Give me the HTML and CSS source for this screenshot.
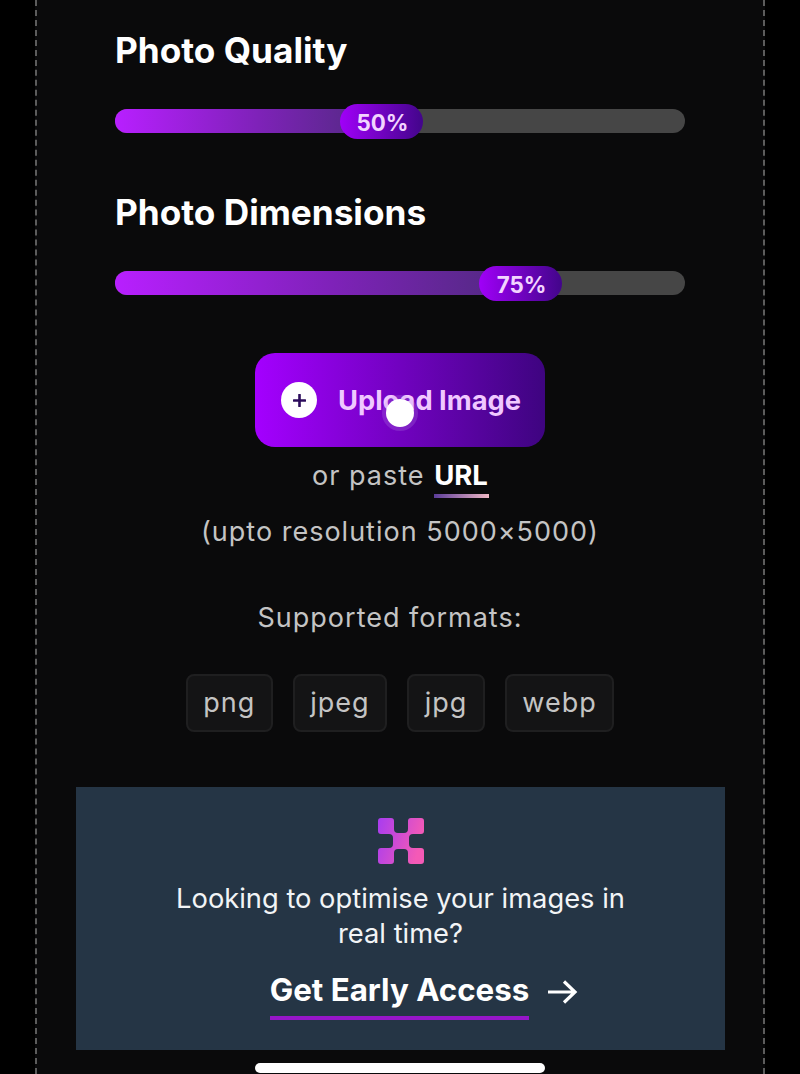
FILE: index.html
```html
<!DOCTYPE html>
<html lang="en">
<head>
<meta charset="utf-8">
<title>Image Optimiser</title>
<link rel="stylesheet" href="styles.css">
</head>
<body>
<main class="frame">
  <section class="controls">
    <h2 class="label">Photo Quality</h2>
    <div class="track">
      <div class="fill" style="width:46%"></div>
      <div class="thumb" style="left:225px">50%</div>
    </div>
    <h2 class="label label-next">Photo Dimensions</h2>
    <div class="track">
      <div class="fill" style="width:70%"></div>
      <div class="thumb" style="left:364px">75%</div>
    </div>
  </section>

  <section class="upload">
    <button class="upload-btn" type="button">
      <span class="plus">
        <svg viewBox="0 0 12 12" width="13" height="13" aria-hidden="true"><path d="M6 .8v10.4M.8 6h10.4" stroke="#2c0c5c" stroke-width="2.4" stroke-linecap="round" fill="none"/></svg>
      </span>
      <span class="upload-text">Upload Image</span>
      <span class="touch"></span>
    </button>
    <p class="paste">or paste <span class="url">URL</span></p>
    <p class="res">(upto resolution 5000×5000)</p>
    <p class="formats">Supported formats:</p>
    <ul class="chips">
      <li class="chip">png</li>
      <li class="chip">jpeg</li>
      <li class="chip">jpg</li>
      <li class="chip">webp</li>
    </ul>
  </section>

  <section class="banner">
    <svg class="logo" viewBox="0 0 46 46" width="46" height="46" aria-hidden="true">
      <defs>
        <linearGradient id="lg" x1="0" y1="0" x2="1" y2="0.3">
          <stop offset="0" stop-color="#a83cf0"/>
          <stop offset="1" stop-color="#f45ab6"/>
        </linearGradient>
      </defs>
      <path fill="url(#lg)" d="M3 0h10a3 3 0 0 1 3 3v8a4 4 0 0 0 4 4h6a4 4 0 0 0 4-4V3a3 3 0 0 1 3-3h10a3 3 0 0 1 3 3v10a3 3 0 0 1-3 3h-8a4 4 0 0 0-4 4v6a4 4 0 0 0 4 4h8a3 3 0 0 1 3 3v10a3 3 0 0 1-3 3H33a3 3 0 0 1-3-3v-8a4 4 0 0 0-4-4h-6a4 4 0 0 0-4 4v8a3 3 0 0 1-3 3H3a3 3 0 0 1-3-3V33a3 3 0 0 1 3-3h8a4 4 0 0 0 4-4v-6a4 4 0 0 0-4-4H3a3 3 0 0 1-3-3V3a3 3 0 0 1 3-3z"/>
    </svg>
    <p class="banner-text">Looking to optimise your images in<br>real time?</p>
    <div class="cta">
      <span class="cta-text">Get Early Access</span>
      <svg class="arrow" viewBox="0 0 32 26" width="32" height="26" aria-hidden="true"><path d="M2 13h27M18 2.5 29 13 18 23.5" stroke="#fff" stroke-width="3.2" fill="none"/></svg>
    </div>
  </section>
</main>
<div class="home-bar"></div>
</body>
</html>
```

FILE: styles.css
```css
* { box-sizing: border-box; }
html, body { margin: 0; padding: 0; height: 100%; }
body {
  background: #000;
  font-family: Inter, "Liberation Sans", sans-serif;
  overflow: hidden;
  position: relative;
}
.frame {
  width: 730px;
  height: 1074px;
  margin-left: 35px;
  background: #0a0a0b;
  border-left: 2px dashed #5c5c5c;
  border-right: 2px dashed #5c5c5c;
  display: flex;
  flex-direction: column;
  overflow: hidden;
}
.controls {
  padding: 30px 78px 0;
}
.label {
  margin: 0;
  font-size: 35.2px;
  line-height: 40px;
  font-weight: 700;
  color: #fff;
}
.label-next { margin-top: 59px; }
.track {
  position: relative;
  height: 24px;
  margin-top: 39px;
  border-radius: 12px;
  background: #464646;
}
.fill {
  height: 100%;
  border-radius: 12px 0 0 12px;
  background: linear-gradient(90deg, #b81fff 0%, #7e22b8 55%, #502a80 100%);
}
.thumb {
  position: absolute;
  top: -5px;
  width: 83px;
  height: 35px;
  padding-left: 2px;
  border-radius: 18px;
  background: linear-gradient(90deg, #a000f8 0%, #42058a 100%);
  color: #f2d4ff;
  font-size: 22.3px;
  line-height: 37px;
  font-weight: 700;
  text-align: center;
}
.upload {
  display: flex;
  flex-direction: column;
  align-items: center;
  margin-top: 58px;
}
.upload-btn {
  position: relative;
  display: flex;
  align-items: center;
  width: 290px;
  height: 94px;
  padding: 0 0 0 26px;
  border: 0;
  border-radius: 20px;
  background: linear-gradient(90deg, #a400ff 0%, #3e0480 100%);
  font-family: inherit;
}
.plus {
  display: flex;
  align-items: center;
  justify-content: center;
  width: 36px;
  height: 36px;
  border-radius: 50%;
  background: #fff;
}
.upload-text {
  margin-left: 21px;
  font-size: 27.3px;
  font-weight: 700;
  color: #f0c8ff;
  white-space: nowrap;
}
.touch {
  position: absolute;
  left: 131px;
  top: 46px;
  width: 28px;
  height: 28px;
  border-radius: 50%;
  background: #fff;
  box-shadow: 0 0 0 4px rgba(190, 150, 230, 0.22);
}
.paste, .res, .formats {
  margin: 0;
  color: #c4c4c4;
  font-size: 27px;
  line-height: 34px;
  letter-spacing: 1px;
  text-align: center;
}
.paste { height: 34px; margin-top: 11px; }
.url {
  display: inline-block;
  position: relative;
  margin-left: 1px;
  color: #fff;
  font-size: 27.5px;
  font-weight: 700;
  letter-spacing: 0;
}
.url::after {
  content: "";
  position: absolute;
  left: 0;
  right: -1px;
  bottom: -6px;
  height: 4px;
  background: linear-gradient(90deg, #5c3d9a 0%, #f0b8c4 100%);
}
.res { margin-top: 23px; }
.formats { margin-top: 52px; margin-right: 20px; }
.chips {
  display: flex;
  gap: 20px;
  margin: 39px 0 0;
  padding: 0;
  list-style: none;
}
.chip {
  height: 58px;
  padding: 0 15.5px;
  border: 2px solid #1f1f20;
  border-radius: 8px;
  background: #141415;
  color: #c4c4c4;
  font-size: 27px;
  line-height: 54px;
  letter-spacing: 1px;
}
.banner {
  display: flex;
  flex-direction: column;
  align-items: center;
  width: 649px;
  height: 263px;
  margin: 55px 0 0 39px;
  padding-top: 31px;
  background: #253545;
  flex: none;
}
.logo { display: block; }
.banner-text {
  margin: 17px 0 0;
  color: #f2f4f6;
  font-size: 27.3px;
  line-height: 35px;
  text-align: center;
}
.cta {
  display: flex;
  align-items: flex-start;
  gap: 17px;
  margin-top: 20px;
  margin-left: 47px;
}
.cta-text {
  color: #fff;
  font-size: 31.3px;
  line-height: 38px;
  font-weight: 700;
  padding-bottom: 7px;
  border-bottom: 4px solid #9616c8;
}
.arrow { margin-top: 8px; }
.home-bar {
  position: absolute;
  left: 255px;
  top: 1063px;
  width: 290px;
  height: 10px;
  border-radius: 5px;
  background: #fff;
}
```
